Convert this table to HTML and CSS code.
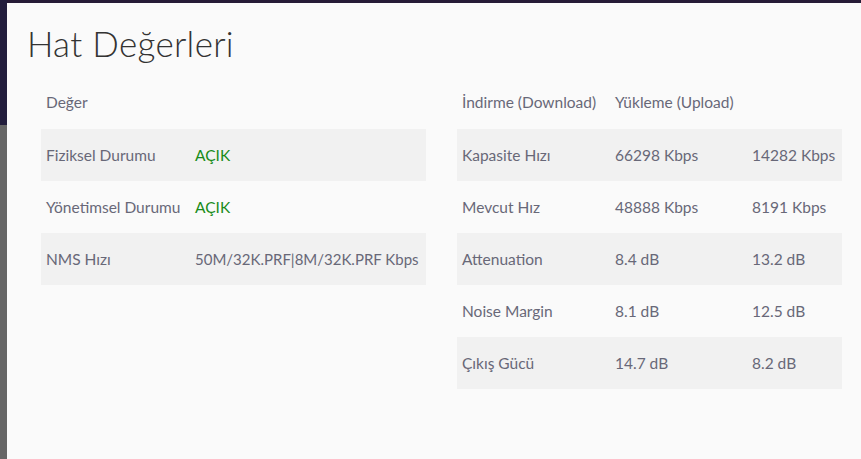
FILE: index.html
```html
<!DOCTYPE html>
<html lang="tr">
<head>
<meta charset="utf-8">
<link rel="stylesheet" href="styles.css">
</head>
<body>
<div class="backdrop">
  <div class="side"></div>
  <div class="modal">
    <h1 class="title">Hat Değerleri</h1>
    <div class="tables">
      <table class="tbl tbl-left">
        <colgroup><col class="c-l1"><col></colgroup>
        <thead><tr><th>Değer</th><th></th></tr></thead>
        <tbody>
          <tr class="alt"><td>Fiziksel Durumu</td><td class="ok">AÇIK</td></tr>
          <tr><td>Yönetimsel Durumu</td><td class="ok">AÇIK</td></tr>
          <tr class="alt"><td>NMS Hızı</td><td class="num">50M/32K.PRF|8M/32K.PRF Kbps</td></tr>
        </tbody>
      </table>
      <table class="tbl tbl-right">
        <colgroup><col class="c-r1"><col class="c-r2"><col></colgroup>
        <thead><tr><th>İndirme (Download)</th><th>Yükleme (Upload)</th><th></th></tr></thead>
        <tbody>
          <tr class="alt"><td>Kapasite Hızı</td><td>66298 Kbps</td><td>14282 Kbps</td></tr>
          <tr><td>Mevcut Hız</td><td>48888 Kbps</td><td>8191 Kbps</td></tr>
          <tr class="alt"><td>Attenuation</td><td>8.4 dB</td><td>13.2 dB</td></tr>
          <tr><td>Noise Margin</td><td>8.1 dB</td><td>12.5 dB</td></tr>
          <tr class="alt"><td>Çıkış Gücü</td><td>14.7 dB</td><td>8.2 dB</td></tr>
        </tbody>
      </table>
    </div>
  </div>
</div>
</body>
</html>
```
FILE: styles.css
```css
html, body {
  margin: 0;
  padding: 0;
  height: 100%;
  overflow: hidden;
}
body {
  background: #26203a;
  font-family: Lato, "Noto Sans", sans-serif;
}
.backdrop {
  display: flex;
  height: 100%;
  padding-top: 3px;
  box-sizing: border-box;
  background: #261b36;
}
.side {
  width: 7px;
  flex: none;
  margin-top: -3px;
  background: linear-gradient(#221d3c 0, #221d3c 125px, #666 125px, #666 100%);
}
.modal {
  flex: none;
  width: 900px;
  background: #fafafa;
  box-sizing: border-box;
  padding: 19px 20px 0 20px;
}
.title {
  margin: 0;
  font-weight: 300;
  font-size: 35px;
  line-height: 42px;
  color: #333;
  letter-spacing: 0.3px;
}
.tables {
  display: flex;
  align-items: flex-start;
  gap: 31px;
  margin-top: 13px;
  padding-left: 14px;
}
.tbl {
  border-collapse: collapse;
  width: 385px;
  table-layout: fixed;
  font-size: 15.5px;
  color: #686878;
}
.tbl th, .tbl td {
  height: 52px;
  padding: 0 5px 1px;
  text-align: left;
  font-weight: 400;
  white-space: nowrap;
  box-sizing: border-box;
}
.tbl thead th {
  padding-bottom: 3px;
}
.tbl .alt {
  background: #f1f1f1;
}
.tbl .num {
  font-size: 15px;
}
.c-l1 { width: 149px; }
.c-r1 { width: 153px; }
.c-r2 { width: 137px; }
.ok { color: #198c19; }
```
